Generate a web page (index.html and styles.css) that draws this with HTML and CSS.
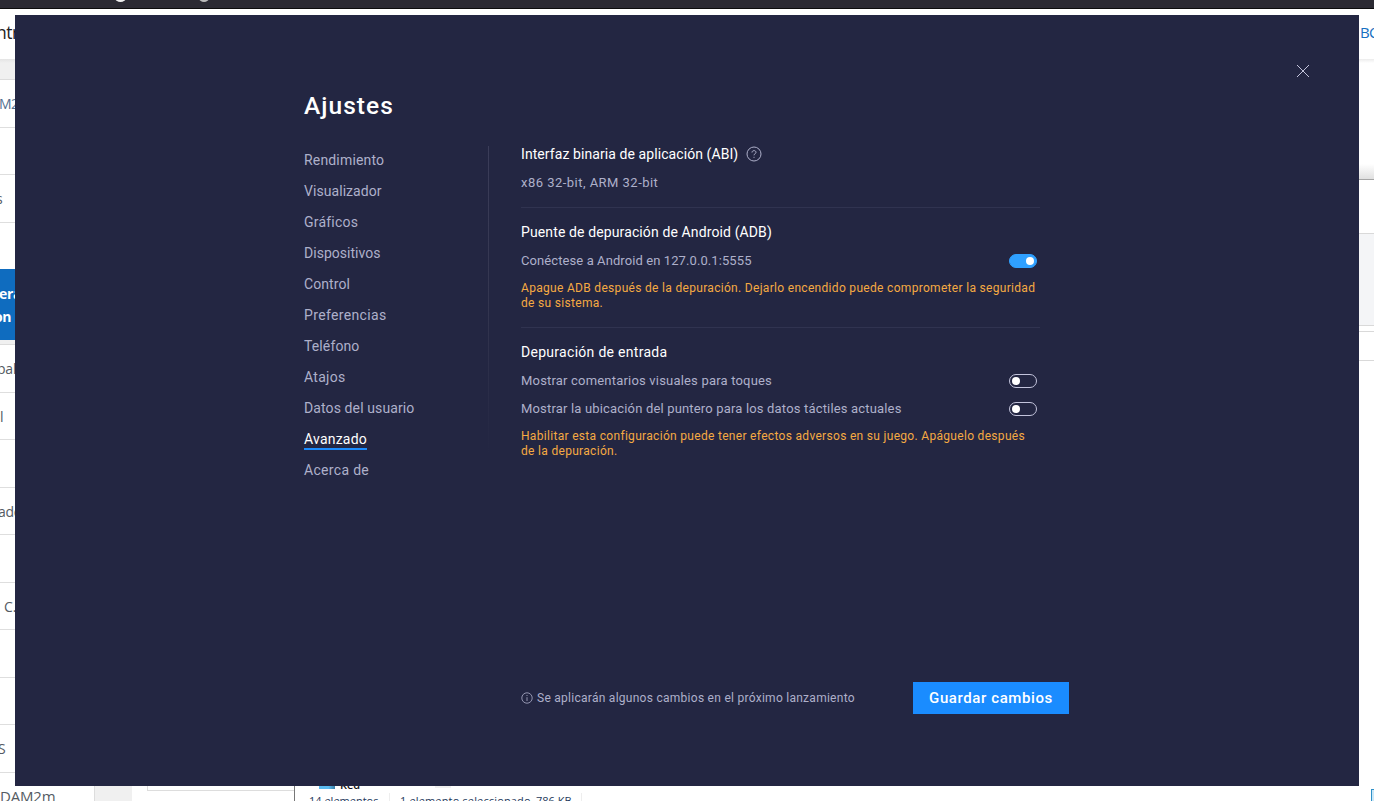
FILE: index.html
```html
<!DOCTYPE html>
<html lang="es">
<head>
<meta charset="utf-8">
<title>Ajustes</title>
<link rel="stylesheet" href="styles.css">
</head>
<body>
<div class="desktop">
  <div class="browser-bar"><span class="tab-dot"></span><span class="tab-dot second"></span></div>
  <div class="site-header"><span class="site-title">ntr</span><span class="site-link">BC</span></div>
  <div class="site-body">
    <div class="site-menu">
      <div class="menu-gap"></div>
      <div class="menu-row link">M2</div>
      <div class="menu-row short"></div>
      <div class="menu-row"><span class="pull-s">s</span></div>
      <div class="menu-row last"></div>
      <div class="menu-active"><span>era</span><span class="pull-on">on</span></div>
      <div class="menu-split"></div>
      <div class="menu-row"><span class="pull-pal">pal</span></div>
      <div class="menu-row short"><span>l</span></div>
      <div class="menu-row"></div>
      <div class="menu-row short"><span class="pull-ad">ado</span></div>
      <div class="menu-row"></div>
      <div class="menu-row short"><span class="push-c">C.</span></div>
      <div class="menu-row"></div>
      <div class="menu-row short"></div>
      <div class="menu-row"><span class="pull-cap">S</span></div>
      <div class="menu-row final">DAM2m</div>
    </div>
    <div class="site-gutter"></div>
    <div class="site-content"><div class="content-box"></div></div>
    <div class="explorer">
      <div class="file-line"><span class="file-icon"></span><span class="file-name">Red</span><span class="file-patch"></span></div>
      <div class="file-status"><span class="count">14 elementos</span><span class="selected">1 elemento seleccionado</span><span class="size">786 KB</span></div>
    </div>
    <div class="site-right">
      <div class="window-shade"></div>
      <div class="window-title"></div>
      <div class="window-tools"></div>
      <div class="window-gap"></div>
      <div class="window-path"></div>
      <div class="window-view"><span class="view-button"></span></div>
    </div>
  </div>
</div>

<main class="dialog">
  <svg class="close" width="14" height="14" viewBox="0 0 14 14"><path d="M1 1 13 13M13 1 1 13"/></svg>
  <h1 class="title">Ajustes</h1>
  <div class="columns">
    <nav class="nav">
      <a class="n1">Rendimiento</a><a class="n2">Visualizador</a><a class="n3">Gráficos</a><a class="n4">Dispositivos</a><a class="n5">Control</a><a class="n6">Preferencias</a><a class="n7">Teléfono</a><a class="n8">Atajos</a><a class="n9">Datos del usuario</a><a class="n10 current">Avanzado</a><a class="n11">Acerca de</a>
    </nav>
    <div class="rule"></div>
    <div class="panel">
      <section class="group">
        <h2><span class="h-abi">Interfaz binaria de aplicación (ABI)</span><svg class="help" width="16" height="16" viewBox="0 0 16 16"><circle cx="8" cy="8" r="7"/><path d="M6 6.5C6 4 10 4 10 6.4C10 7.7 8 7.7 8 9.3M8 10.8V11.8"/></svg></h2>
        <div class="option"><span class="o-abi">x86 32-bit, ARM 32-bit</span></div>
      </section>
      <section class="group">
        <h2><span class="h-adb">Puente de depuración de Android (ADB)</span></h2>
        <div class="option"><span class="o-adb">Conéctese a Android en 127.0.0.1:5555</span><span class="switch on"></span></div>
        <p class="warning">Apague ADB después de la depuración. Dejarlo encendido puede comprometer la seguridad<br>de su sistema.</p>
      </section>
      <section class="group">
        <h2><span class="h-in">Depuración de entrada</span></h2>
        <div class="option"><span class="o-touch">Mostrar comentarios visuales para toques</span><span class="switch"></span></div>
        <div class="option"><span class="o-pointer">Mostrar la ubicación del puntero para los datos táctiles actuales</span><span class="switch"></span></div>
        <p class="warning">Habilitar esta configuración puede tener efectos adversos en su juego. Apáguelo después<br>de la depuración.</p>
      </section>
    </div>
  </div>
  <footer class="footer">
    <svg class="info" width="12" height="12" viewBox="0 0 12 12"><circle cx="6" cy="6" r="5.2"/><path d="M6 5.2V9M6 3V4"/></svg>
    <span class="note">Se aplicarán algunos cambios en el próximo lanzamiento</span>
    <button class="save">Guardar cambios</button>
  </footer>
</main>
</body>
</html>
```

FILE: styles.css
```css
* { box-sizing: border-box; }
body { margin: 0; width: 1374px; height: 801px; overflow: hidden; position: relative; background: #fff; font-family: Roboto, "Liberation Sans", sans-serif; }

/* Windows behind the dialog */
.desktop { height: 801px; overflow: hidden; display: flex; flex-direction: column; font-family: "Open Sans", "Noto Sans", sans-serif; color: #555b63; }
.browser-bar { height: 9px; flex: none; background: #2b2a33; border-bottom: 1px solid #0c0c0d; display: flex; padding-left: 115px; overflow: hidden; }
.tab-dot { width: 11px; height: 8px; margin-top: -6px; border-radius: 50%; background: #eee; }
.tab-dot.second { margin-left: 73px; width: 10px; background: #bbb; }
.site-header { height: 50px; flex: none; display: flex; justify-content: space-between; align-items: center; padding-bottom: 4px; background: #fff; color: #222; }
.site-title { font-size: 17.5px; margin-left: -4px; letter-spacing: -.5px; }
.site-link { font-size: 15px; width: 14px; color: #1670c2; white-space: nowrap; letter-spacing: -.8px; }
.site-body { flex: 1; display: flex; min-height: 0; }
.site-menu { width: 94px; font-size: 14px; }
.menu-gap { height: 21px; background: linear-gradient(#e4e4e4, #f0f0f0 4px); border-bottom: 1px solid #dcdcdc; }
.menu-row { height: 48px; line-height: 47px; border-bottom: 1px solid #dedede; white-space: nowrap; }
.menu-row.short { height: 47px; }
.menu-row.last { height: 46px; border: 0; }
.menu-row.link { color: #52708f; text-indent: -1px; letter-spacing: -.5px; }
.menu-row.final { border: 0; font-size: 15px; line-height: 46px; letter-spacing: -.2px; }
.menu-active { height: 71px; padding-top: 14px; background: #0f6cbf; color: #fff; font-weight: 700; line-height: 22.5px; display: flex; flex-direction: column; letter-spacing: -.3px; }
.menu-active span { margin-left: -1px; }
.menu-active .pull-on { margin-left: -6px; }
.menu-split { height: 5px; background: #f0f0f0; border-bottom: 1px solid #dcdcdc; }
.pull-s { margin-left: -4px; }
.pull-cap { margin-left: -2px; }
.pull-pal { margin-left: -3px; letter-spacing: -.2px; }
.pull-ad { margin-left: -2px; letter-spacing: -.3px; }
.push-c { margin-left: 4px; }
.site-gutter { width: 38px; background: #f0f0f0; border-left: 1px solid #ddd; }
.site-content { width: 162px; padding-left: 15px; }
.content-box { height: 732px; border: solid #ddd; border-width: 0 0 1px 1px; }
.explorer { flex: 1; border-left: 1px solid #777; padding-top: 727px; color: #1e395b; font-size: 11px; }
.file-line { height: 5px; display: flex; overflow: hidden; padding-left: 24px; }
.file-icon { width: 16px; height: 3px; background: linear-gradient(90deg, #5bbcf1 60%, #397da6); }
.file-name { margin: -9px 0 0 5px; width: 25px; color: #111; font-size: 11px; font-weight: 600; line-height: 16px; }
.file-patch { height: 2px; width: 16px; margin-left: 70px; background: #f0f0f0; }
.file-status { display: flex; padding: 2px 0 0 14px; line-height: 15px; white-space: nowrap; }
.count { width: 81px; border-right: 1px solid #eee; }
.selected { margin-left: 10px; width: 136px; letter-spacing: .15px; }
.size { width: 46px; border-right: 1px solid #eee; }
.site-right { width: 15px; display: flex; flex-direction: column; }
.window-shade { height: 121px; background: linear-gradient(#ececec, #fff 4px, #fff 105px, #e0e0e0); border-bottom: 1px solid #a5a5a5; }
.window-title { height: 54px; border-bottom: 1px solid #d9d9d9; }
.window-tools { height: 92px; background: #f4f5f7; border-bottom: 1px solid #d9d9d9; }
.window-gap { height: 6px; border-bottom: 1px solid #d9d9d9; }
.window-path { height: 29px; border-bottom: 1px solid #d9d9d9; }
.window-view { height: 440px; padding: 428px 0 0 12px; }
.view-button { display: block; height: 16px; width: 12px; border: 1px solid #2f90c8; background: #cbe8f8; }

/* Settings dialog, drawn over the windows */
.dialog { position: absolute; left: 15px; top: 15px; width: 1344px; height: 771px; background: #232642; color: #aeb0ca; }
.close { position: absolute; right: 49px; top: 49px; fill: none; stroke: #c3c4dc; stroke-width: 1; }
.title { margin: 0; padding: 75px 0 0 289px; font-size: 24.5px; line-height: 32px; font-weight: 500; color: #fff; letter-spacing: 1.05px; }
.columns { display: flex; height: 545px; padding: 24px 0 0 289px; }
.nav { width: 184px; display: flex; flex-direction: column; align-items: flex-start; gap: 10px; padding-top: 4px; font-size: 14px; line-height: 21px; }
.nav a { height: 21px; }
.n1 { letter-spacing: .17px; }
.n2 { letter-spacing: .06px; }
.n3 { letter-spacing: .22px; }
.n4 { letter-spacing: .02px; }
.n5 { letter-spacing: .08px; }
.n6 { letter-spacing: .35px; }
.n7 { letter-spacing: .12px; }
.n8 { letter-spacing: .3px; }
.n9 { letter-spacing: .11px; }
.n10 { letter-spacing: .22px; }
.n11 { letter-spacing: .32px; }
.nav .current { color: #fff; border-bottom: 2px solid #1a8cff; }
.rule { width: 1px; height: 310px; background: linear-gradient(#3b3d59, #343650 50%, #232642); }
.panel { width: 551px; padding-left: 32px; margin-top: -1px; }
.group { border-bottom: 1px solid #303350; padding-bottom: 16px; margin-bottom: 15px; }
.group:first-child { padding-bottom: 14px; }
.group:last-child { border: 0; }
.group h2 { margin: 0 0 10px; height: 18px; line-height: 18px; font-size: 14px; font-weight: 400; color: #fff; display: flex; align-items: center; }
.h-abi { letter-spacing: .08px; }
.h-adb { letter-spacing: .12px; }
.h-in { letter-spacing: .29px; }
.help { margin-left: 8px; fill: none; stroke: #aeb0ca; stroke-width: 1; }
.option { height: 20px; line-height: 20px; margin-bottom: 8px; padding-right: 3px; display: flex; align-items: center; justify-content: space-between; font-size: 13px; }
.o-abi { letter-spacing: .47px; }
.o-adb { letter-spacing: .09px; }
.o-touch { letter-spacing: .19px; }
.o-pointer { letter-spacing: .17px; }
.group:first-child .option { margin-bottom: 0; }
.switch { width: 28px; height: 14px; border: 1px solid #c3c4dc; border-radius: 7px; padding: 2px; display: flex; }
.switch::before { content: ""; width: 8px; height: 8px; border-radius: 50%; background: #fff; }
.switch.on { background: #2fa0ff; border-color: #2fa0ff; justify-content: flex-end; }
.warning { margin: 10px 0 0; font-size: 12px; line-height: 15px; color: #f5aa42; white-space: nowrap; letter-spacing: .31px; }
.footer { display: flex; align-items: center; height: 32px; width: 548px; margin-left: 506px; margin-top: 15px; font-size: 12px; letter-spacing: .27px; }
.info { fill: none; stroke: #aeb0ca; stroke-width: .8; margin-right: 4px; }
.save { margin-left: auto; width: 156px; height: 32px; padding: 0; border: 0; background: #1a8cff; color: #fff; font: 500 15px/32px Roboto, sans-serif; letter-spacing: .6px; }
```
